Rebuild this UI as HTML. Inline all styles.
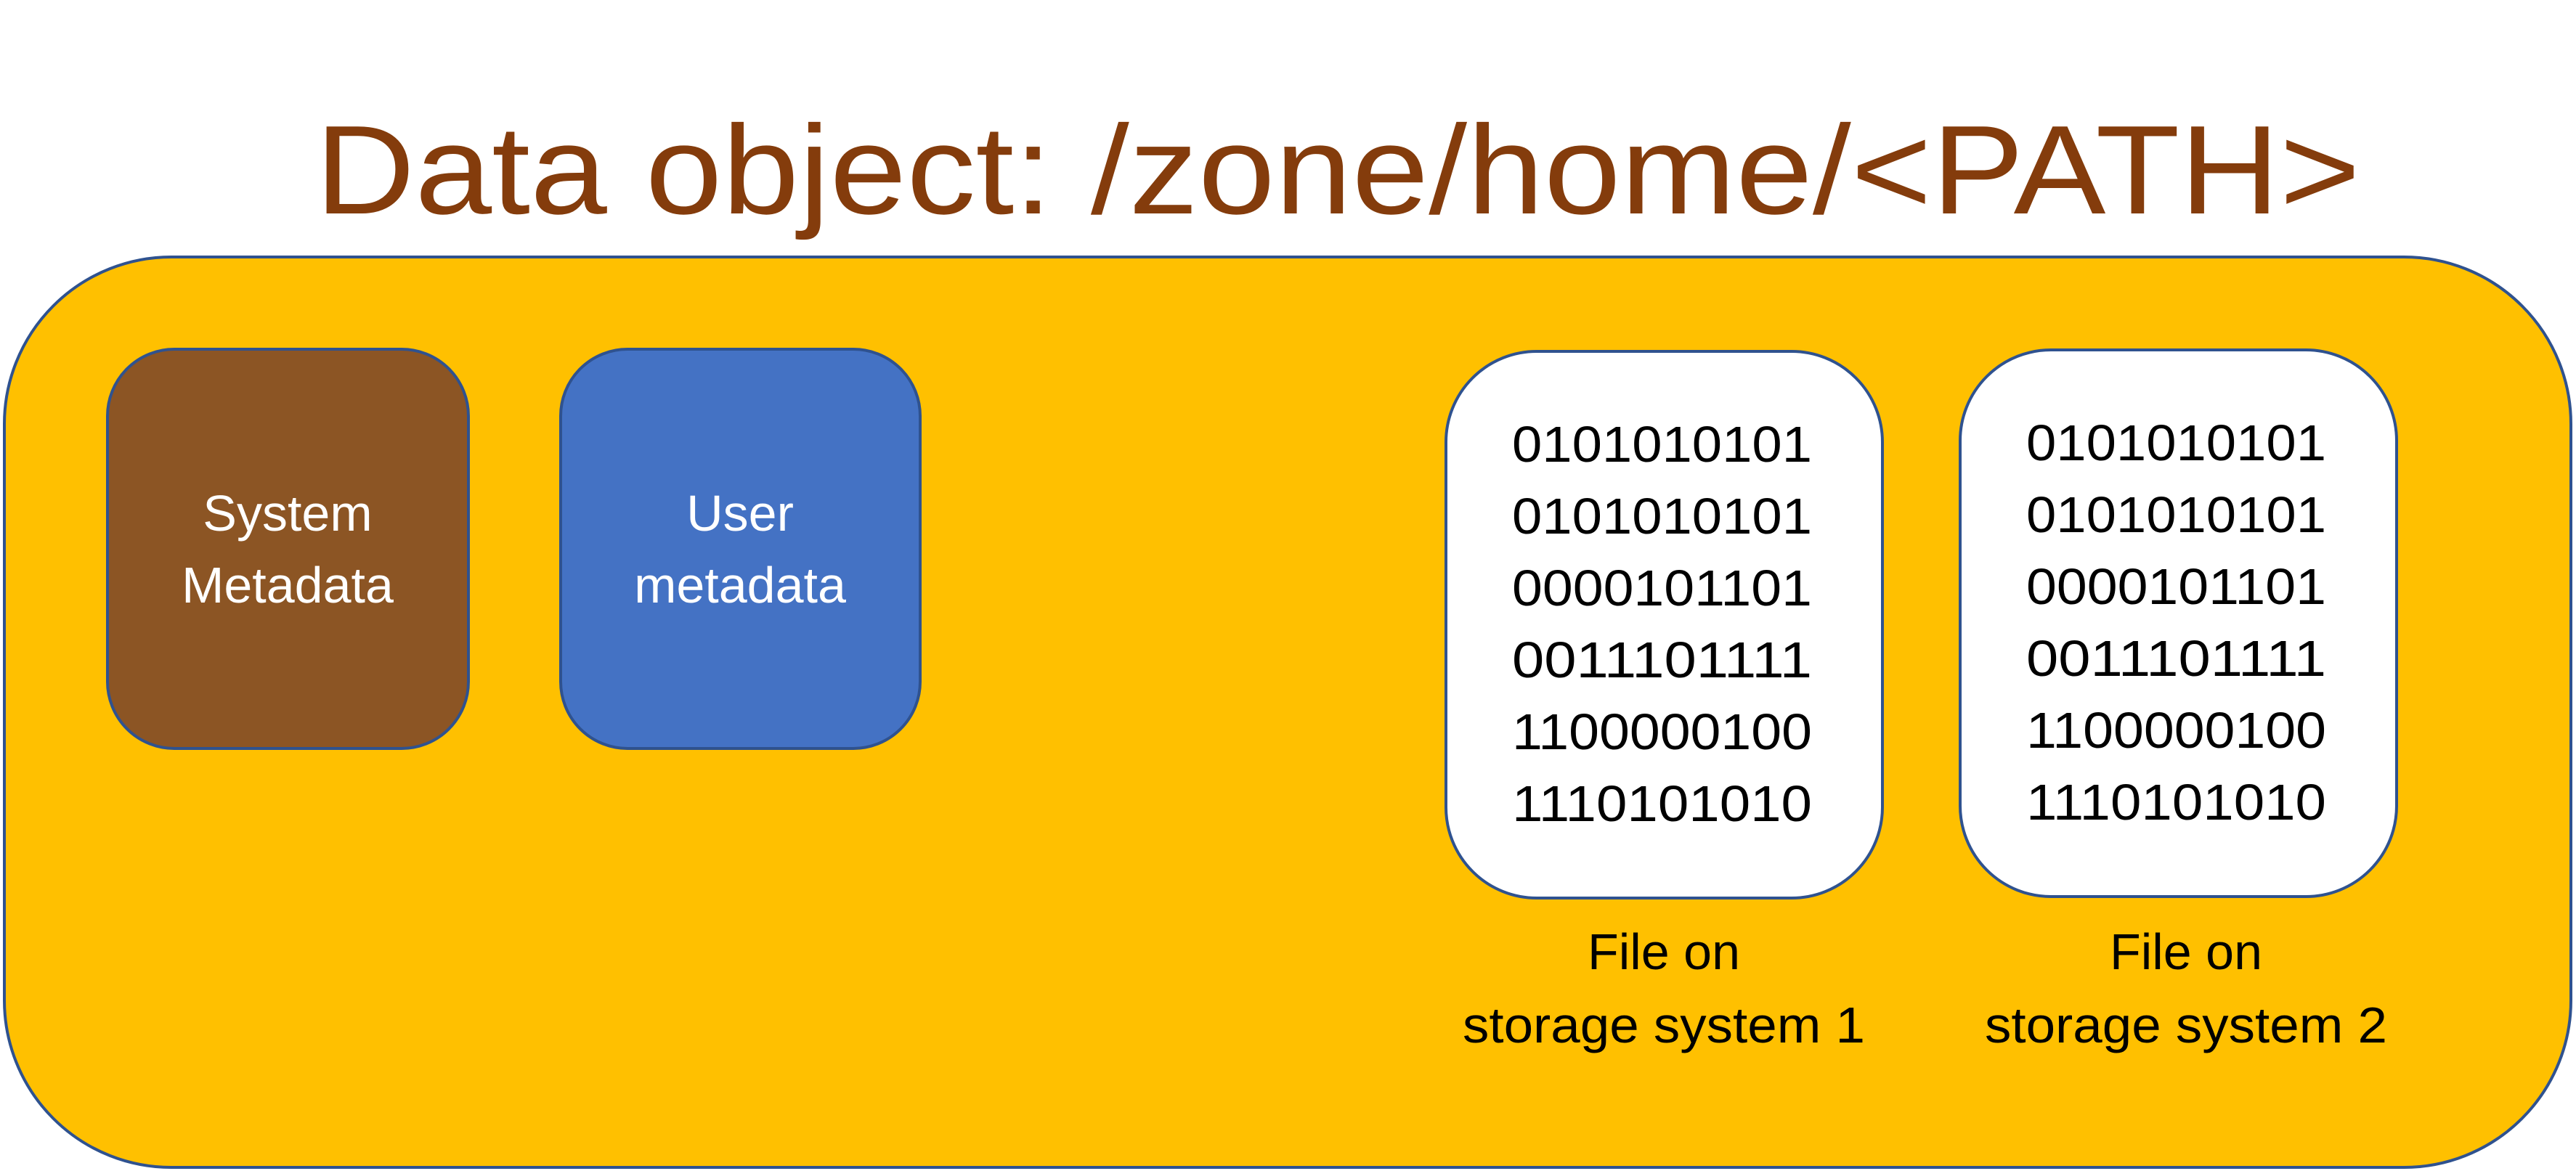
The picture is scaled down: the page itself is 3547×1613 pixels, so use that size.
<!DOCTYPE html>
<html><head><meta charset="utf-8"><style>html,body{margin:0;padding:0;background:#fff;}svg{display:block}</style></head>
<body>
<svg width="3547" height="1613" viewBox="0 0 3547 1613" xmlns="http://www.w3.org/2000/svg" font-family="Liberation Sans, sans-serif">
<text x="434" y="294" font-size="174" fill="#843C0C" textLength="2816" lengthAdjust="spacingAndGlyphs">Data object: /zone/home/&lt;PATH&gt;</text>
<rect x="6" y="354" width="3534" height="1254" rx="230" fill="#FFC000" stroke="#2F528F" stroke-width="4"/>
<rect x="148" y="481" width="497" height="550" rx="92" fill="#8C5524" stroke="#2F528F" stroke-width="4"/>
<rect x="772" y="481" width="495" height="550" rx="92" fill="#4472C4" stroke="#2F528F" stroke-width="4"/>
<g fill="#fff" font-size="70" text-anchor="middle">
<text x="396" y="731">System</text>
<text x="396" y="830">Metadata</text>
<text x="1019" y="731">User</text>
<text x="1019" y="830">metadata</text>
</g>
<rect x="1991" y="484" width="601" height="753" rx="125" fill="#fff" stroke="#2F528F" stroke-width="4"/>
<rect x="2699" y="482" width="601" height="753" rx="125" fill="#fff" stroke="#2F528F" stroke-width="4"/>
<g fill="#000" font-size="70">
<text x="2082" y="636" textLength="413" lengthAdjust="spacingAndGlyphs">0101010101</text>
<text x="2082" y="735" textLength="413" lengthAdjust="spacingAndGlyphs">0101010101</text>
<text x="2082" y="834" textLength="413" lengthAdjust="spacingAndGlyphs">0000101101</text>
<text x="2082" y="933" textLength="413" lengthAdjust="spacingAndGlyphs">0011101111</text>
<text x="2082" y="1032" textLength="413" lengthAdjust="spacingAndGlyphs">1100000100</text>
<text x="2082" y="1131" textLength="413" lengthAdjust="spacingAndGlyphs">1110101010</text>
<text x="2790" y="634" textLength="413" lengthAdjust="spacingAndGlyphs">0101010101</text>
<text x="2790" y="733" textLength="413" lengthAdjust="spacingAndGlyphs">0101010101</text>
<text x="2790" y="832" textLength="413" lengthAdjust="spacingAndGlyphs">0000101101</text>
<text x="2790" y="931" textLength="413" lengthAdjust="spacingAndGlyphs">0011101111</text>
<text x="2790" y="1030" textLength="413" lengthAdjust="spacingAndGlyphs">1100000100</text>
<text x="2790" y="1129" textLength="413" lengthAdjust="spacingAndGlyphs">1110101010</text>
</g>
<g fill="#000" font-size="70" text-anchor="middle">
<text x="2291" y="1335">File on</text>
<text x="2291" y="1436" textLength="554" lengthAdjust="spacingAndGlyphs">storage system 1</text>
<text x="3010" y="1335">File on</text>
<text x="3010" y="1436" textLength="554" lengthAdjust="spacingAndGlyphs">storage system 2</text>
</g>
</svg>
</body></html>
